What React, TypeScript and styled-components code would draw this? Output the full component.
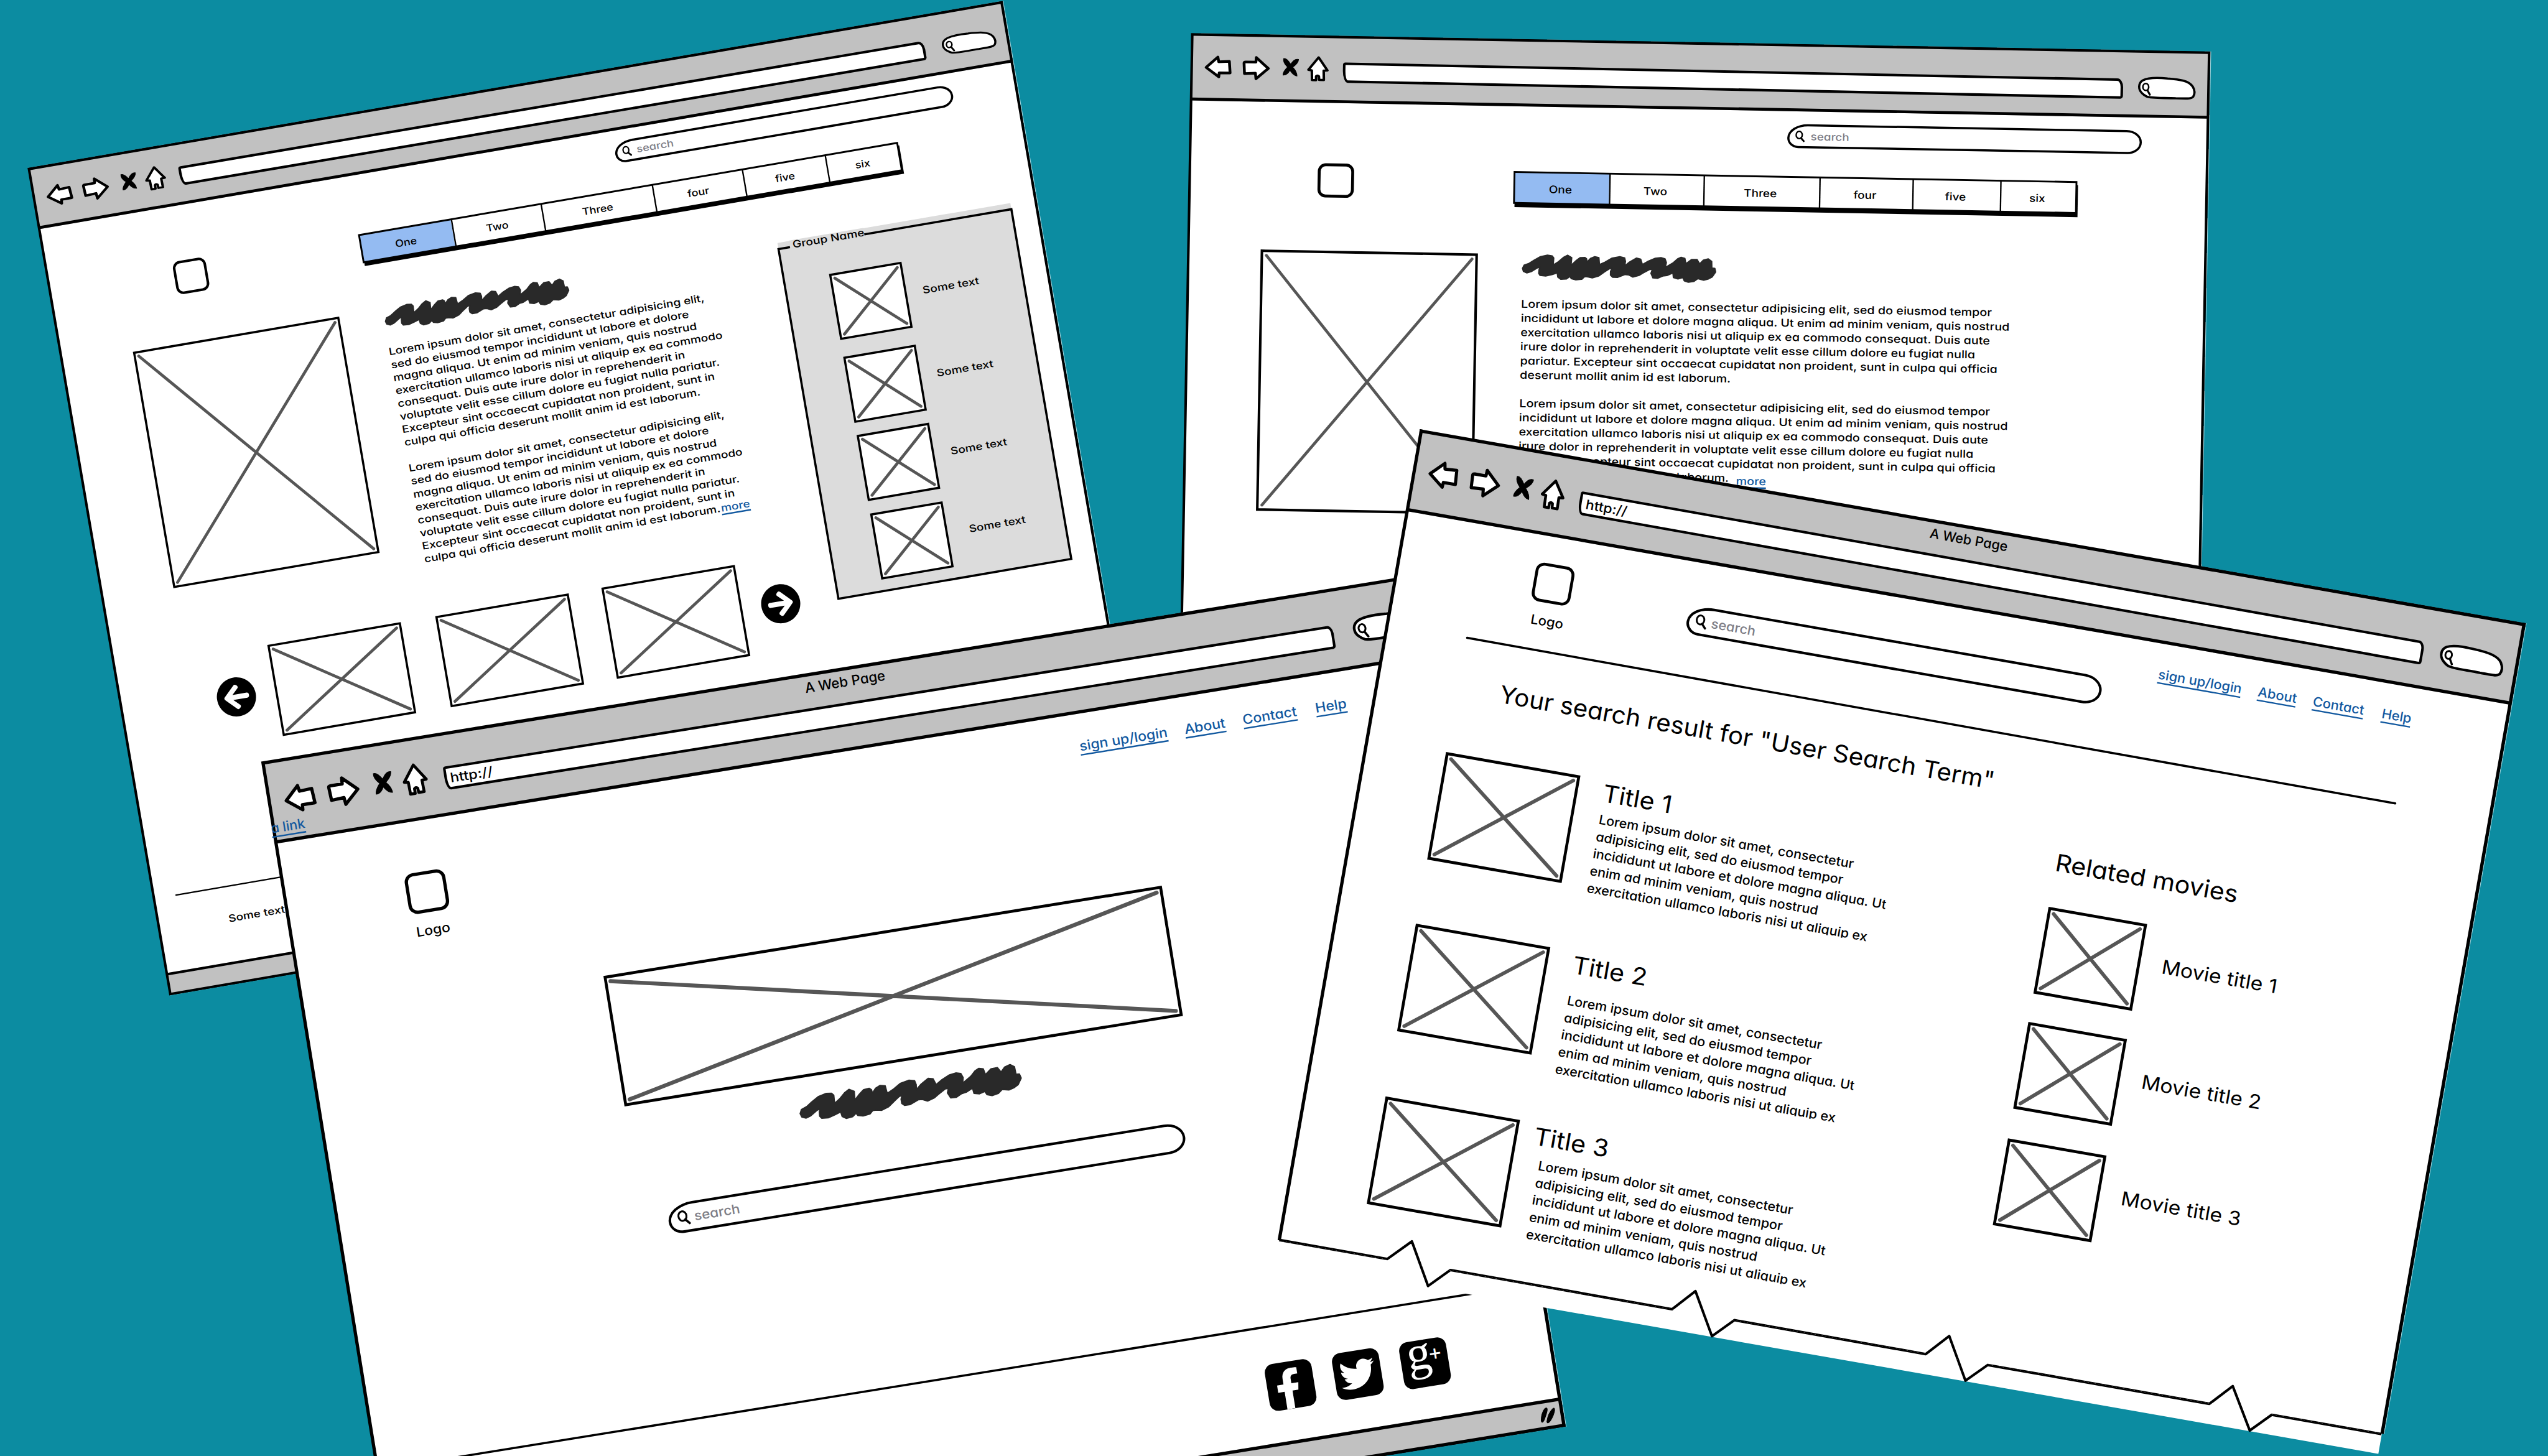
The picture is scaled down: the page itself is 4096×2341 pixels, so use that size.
import React from "react";
import styled, { createGlobalStyle, css } from "styled-components";
import { FaArrowCircleLeft, FaArrowCircleRight, FaFacebookF, FaTwitter } from "react-icons/fa";

const INK = "#000";
const CHROME = "#c1c1c1";
const LINK = "#11589f";
const HINT = "#7d7d86";

const GlobalStyle = createGlobalStyle`
  html, body { margin: 0; padding: 0; overflow: hidden; background: #0c8ca1; }
  * { box-sizing: border-box; }
`;

const Viewport = styled.main`
  position: relative;
  width: 4096px;
  height: 2341px;
  overflow: hidden;
  background: #0c8ca1;
`;

/* The desktop is laid out on a 7000 x 4000 canvas. */
const Desktop = styled.div`
  position: relative;
  width: 7000px;
  height: 4000px;
  transform: scale(0.585143);
  transform-origin: 0 0;
  font-family: Inter, "Open Sans", sans-serif;
  font-weight: 450;
  font-feature-settings: "cv11" 1;
  color: ${INK};
`;

/* ---------- window ---------- */

const WindowBox = styled.section<{
  $x: number; $y: number; $w: number; $h: number; $r: number; $stroke: number; $torn?: number;
}>`
  position: absolute;
  left: ${(p) => p.$x}px;
  top: ${(p) => p.$y}px;
  width: ${(p) => p.$w}px;
  height: ${(p) => p.$h}px;
  transform: rotate(${(p) => p.$r}deg);
  transform-origin: 0 0;
  background: #fff;
  display: flex;
  flex-direction: column;

  &::after {
    content: "";
    position: absolute;
    top: ${(p) => -p.$stroke / 2}px;
    left: ${(p) => -p.$stroke / 2}px;
    right: ${(p) => -p.$stroke / 2}px;
    bottom: ${(p) => (p.$torn ? p.$torn : -p.$stroke / 2)}px;
    border: ${(p) => p.$stroke}px solid ${INK};
    ${(p) => p.$torn && css`border-bottom: 0;`}
    box-shadow: 2px 0 0 rgba(255, 255, 255, 0.6);
    pointer-events: none;
  }
`;

const Chrome = styled.header<{ $h: number; $stroke: number }>`
  flex: none;
  height: ${(p) => p.$h + p.$stroke / 2}px;
  margin-bottom: ${(p) => -p.$stroke / 2}px;
  background: ${CHROME};
  border-bottom: ${(p) => p.$stroke}px solid ${INK};
`;

const ChromeTitle = styled.div<{ $h: number }>`
  height: ${(p) => p.$h}px;
  display: flex;
  justify-content: center;
  padding: 11px 8px 0 0;
`;

const ChromeRow = styled.div`
  display: flex;
  align-items: flex-start;
`;

const Glyph = styled.svg<{ $w: number; $h: number; $ml: number }>`
  flex: none;
  display: block;
  overflow: visible;
  width: ${(p) => p.$w}px;
  height: ${(p) => p.$h}px;
  margin-left: ${(p) => p.$ml}px;
`;

const UrlBar = styled.div<{ $w: number; $h: number; $mt: number; $ml: number }>`
  flex: none;
  width: ${(p) => p.$w}px;
  height: ${(p) => p.$h}px;
  margin: ${(p) => p.$mt}px 0 0 ${(p) => p.$ml}px;
  background: #fff;
  outline: 7px solid ${INK};
  outline-offset: -3px;
  border-radius: 3px 12px 4px 10px / 3px 20px 4px 30px;
  transform: rotate(0.15deg);
  transform-origin: 0 0;
  padding-left: 12px;
  display: flex;
  align-items: center;
`;

/* ---------- text ---------- */

const Text = styled.div<{
  $s: number; $lh?: number; $x?: number; $mt?: number; $ml?: number; $w?: number; $clip?: number; $c?: string;
}>`
  flex: none;
  font-size: ${(p) => p.$s}px;
  line-height: ${(p) => p.$lh ?? 48}px;
  margin: ${(p) => p.$mt ?? 0}px 0 0 ${(p) => p.$ml ?? 0}px;
  color: ${(p) => p.$c ?? INK};
  white-space: pre;
  transform: scaleX(${(p) => p.$x ?? 1});
  transform-origin: 0 0;
  ${(p) => p.$w !== undefined && css`width: ${p.$w}px;`}
  ${(p) => p.$clip !== undefined && css`height: ${p.$clip}px; overflow: hidden;`}
`;

const Heading = styled(Text)`
  font-weight: 400;
`;

const Link = styled.a<{ $ml?: number; $drop?: number; $s?: number }>`
  color: ${LINK};
  margin-left: ${(p) => p.$ml ?? 0}px;
  ${(p) => p.$drop && css`position: relative; top: ${p.$drop}px;`}
  text-decoration: underline;
  text-decoration-thickness: 3.5px;
  text-decoration-skip-ink: none;
  text-underline-offset: ${(p) => p.$s ?? 9}px;
`;

const CornerLink = styled.div`
  position: absolute;
  left: -7px;
  top: 158px;
  z-index: 2;
`;

/* ---------- wireframe parts ---------- */

const Body = styled.div<{ $h: number }>`
  flex: none;
  height: ${(p) => p.$h}px;
  display: flex;
  flex-direction: column;
  align-items: flex-start;
`;

const Row = styled.div<{ $h?: number; $mt?: number; $ml?: number; $gap?: number; $center?: boolean }>`
  flex: none;
  display: flex;
  align-items: ${(p) => (p.$center ? "center" : "flex-start")};
  gap: ${(p) => p.$gap ?? 0}px;
  margin: ${(p) => p.$mt ?? 0}px 0 0 ${(p) => p.$ml ?? 0}px;
  ${(p) => p.$h !== undefined && css`height: ${p.$h}px;`}
`;

const Column = styled.div<{ $w: number; $mt?: number; $ml?: number }>`
  flex: none;
  display: flex;
  flex-direction: column;
  align-items: flex-start;
  width: ${(p) => p.$w}px;
  margin: ${(p) => p.$mt ?? 0}px 0 0 ${(p) => p.$ml ?? 0}px;
`;

const LogoBox = styled.div<{ $w: number; $h?: number; $mt?: number; $ml?: number }>`
  flex: none;
  width: ${(p) => p.$w}px;
  height: ${(p) => p.$h ?? p.$w}px;
  margin: ${(p) => p.$mt ?? 0}px 0 0 ${(p) => p.$ml ?? 0}px;
  border: ${(p) => p.$w * 0.08}px solid ${INK};
  border-radius: ${(p) => p.$w * 0.22}px;
`;

const ImageBox = styled.div<{ $w: number; $h: number; $mt?: number; $ml?: number; $stroke: number }>`
  flex: none;
  width: ${(p) => p.$w}px;
  height: ${(p) => p.$h}px;
  margin: ${(p) => p.$mt ?? 0}px 0 0 ${(p) => p.$ml ?? 0}px;
  background: #fff;
  outline: ${(p) => p.$stroke}px solid ${INK};
  outline-offset: ${(p) => -p.$stroke / 2}px;

  svg { display: block; }
`;

const SearchPill = styled.div<{ $w: number; $h: number; $mt?: number; $ml?: number; $stroke: number }>`
  flex: none;
  width: ${(p) => p.$w}px;
  height: ${(p) => p.$h}px;
  margin: ${(p) => p.$mt ?? 0}px 0 0 ${(p) => p.$ml ?? 0}px;
  display: flex;
  align-items: center;
  background: #fff;
  outline: ${(p) => p.$stroke}px solid ${INK};
  outline-offset: ${(p) => -p.$stroke / 2}px;
  border-radius: ${(p) => `${p.$h * 0.9}px ${p.$h * 0.65}px ${p.$h * 0.6}px ${p.$h * 0.45}px / ${p.$h * 0.58}px ${p.$h * 0.5}px ${p.$h * 0.48}px ${p.$h * 0.4}px`};
`;

const Rule = styled.hr<{ $w: number; $ml: number; $mt?: number; $t: number; $r?: number }>`
  flex: none;
  width: ${(p) => p.$w}px;
  height: ${(p) => p.$t}px;
  margin: ${(p) => p.$mt ?? 0}px 0 0 ${(p) => p.$ml}px;
  border: 0;
  background: ${INK};
  transform: rotate(${(p) => p.$r ?? 0}deg);
  border-radius: 3px;
`;

const TabBar = styled.nav<{ $h: number; $mt: number; $ml: number; $shadow: number }>`
  flex: none;
  display: flex;
  height: ${(p) => p.$h}px;
  margin: ${(p) => p.$mt}px 0 0 ${(p) => p.$ml}px;
  outline: 5px solid ${INK};
  outline-offset: -2px;
  box-shadow: 3px ${(p) => p.$shadow}px 0 2px ${INK};
`;

const Tab = styled.div<{ $w: number; $on?: boolean; $s: number; $x: number }>`
  width: ${(p) => p.$w}px;
  display: flex;
  align-items: center;
  justify-content: center;
  background: ${(p) => (p.$on ? "#94bbf2" : "#fff")};
  font-size: ${(p) => p.$s}px;
  padding: 6px 8px 0 0;

  & + & { border-left: 4px solid ${INK}; }

  span { transform: scaleX(${(p) => p.$x}); }
`;

const Group = styled.aside`
  flex: none;
  width: 649px;
  height: 992px;
  margin-top: 7px;
  padding-top: 17px;
  background: #dcdcdc;
`;

const GroupFrame = styled.div`
  height: 975px;
  outline: 6px solid ${INK};
  outline-offset: -3px;
  display: flex;
  flex-direction: column;
  align-items: flex-start;
`;

const Legend = styled.div`
  position: relative;
  width: 207px;
  margin: -18px 0 0 32px;
  padding-left: 8px;
  background: #dcdcdc;
`;

const StatusBar = styled.footer<{ $h: number; $stroke: number }>`
  flex: none;
  margin-top: auto;
  height: ${(p) => p.$h}px;
  background: ${CHROME};
  border-top: ${(p) => p.$stroke}px solid ${INK};
  display: flex;
  justify-content: flex-end;
  align-items: center;
  padding-right: 16px;
`;

const Badge = styled.div<{ $bottom?: boolean }>`
  width: 130px;
  height: 130px;
  border-radius: 24px;
  background: ${INK};
  color: #fff;
  display: flex;
  justify-content: ${(p) => (p.$bottom ? "flex-end" : "center")};
  align-items: ${(p) => (p.$bottom ? "flex-end" : "center")};
  padding-right: ${(p) => (p.$bottom ? 16 : 0)}px;
`;

const PlusMark = styled.span`
  font-family: "Liberation Serif", serif;
  font-weight: 400;
  font-size: 134px;
  line-height: 154px;
  margin-top: -44px;
  display: flex;

  i {
    font-style: normal;
    font-size: 56px;
    line-height: 172px;
    margin-left: -4px;
    -webkit-text-stroke: 2px #fff;
  }
`;

/* ---------- drawings ---------- */

const strokeProps = { fill: "#fff", stroke: INK, strokeWidth: 9, strokeLinejoin: "round" as const };

function NavGlyphs({ sx, sy }: { sx: number; sy: number }) {
  const h = 100 * sy;
  return (
    <>
      <Glyph $w={88 * sx} $h={h} $ml={42 * sx} viewBox="42 60 88 100" preserveAspectRatio="none">
        <path {...strokeProps} d="M47 113 L84 77 L87 93 L121 91 L124 131 L89 131 L88 145 Z" />
      </Glyph>
      <Glyph $w={90 * sx} $h={h} $ml={32 * sx} viewBox="162 60 90 100" preserveAspectRatio="none">
        <path {...strokeProps} d="M168 96 Q168 92 174 92 L206 92 L207 76 L246 113 L207 149 L205 130 L170 132 Z" />
      </Glyph>
      <Glyph $w={50 * sx} $h={h} $ml={40 * sx} viewBox="290 60 50 100" preserveAspectRatio="none">
        <path
          fill={INK}
          stroke={INK}
          strokeWidth={2}
          d="M293 78 C300 76 308 84 316 97 C324 83 332 77 341 80 C341 90 333 99 323 107 C330 115 337 124 337 137 C329 137 320 128 314 118 C308 130 301 136 292 135 C291 125 299 115 306 107 C297 98 291 88 293 78 Z"
        />
      </Glyph>
      <Glyph $w={72 * sx} $h={h} $ml={28 * sx} viewBox="370 60 72 100" preserveAspectRatio="none">
        <path {...strokeProps} strokeWidth={8} d="M407 72 L436 116 L424 117 L425 149 L410 149 L409 137 Q404 132 400 137 L400 150 L387 150 L386 117 L375 115 Z" />
      </Glyph>
    </>
  );
}

function Magnifier({ size, ml, mr }: { size: number; ml: number; mr: number }) {
  return (
    <Glyph $w={size} $h={size} $ml={ml} viewBox="0 0 40 40" style={{ marginRight: mr }}>
      <ellipse cx="17" cy="16" rx="10.5" ry="12.5" fill="none" stroke={INK} strokeWidth="5" />
      <path d="M23 26 L33 37" stroke={INK} strokeWidth="6" strokeLinecap="round" />
    </Glyph>
  );
}

const Offset = styled.div<{ $mt: number; $ml: number }>`
  flex: none;
  margin: ${(p) => p.$mt}px 0 0 ${(p) => p.$ml}px;
`;

function SearchBlob({ w, h, mt, ml }: { w: number; h: number; mt: number; ml: number }) {
  return (
    <Offset $mt={mt} $ml={ml}>
      <Glyph $w={w} $h={h} $ml={0} viewBox="0 0 180 70" preserveAspectRatio="none">
        <path {...strokeProps} strokeWidth={7} d="M14 52 C1 40 1 20 16 11 C32 2 66 2 92 4 C130 6 158 10 170 28 C177 40 177 52 172 60 C166 68 148 66 118 66 C78 65 42 68 28 62 C20 58 17 55 14 52 Z" />
        <ellipse cx="25" cy="32" rx="9" ry="11" fill="none" stroke={INK} strokeWidth="5" />
        <path d="M30 42 L38 56" stroke={INK} strokeWidth="6" strokeLinecap="round" />
      </Glyph>
    </Offset>
  );
}

const SCRIBBLE =
  "88,235 100,208 135,195 170,170 215,142 265,130 300,136 311,152 308,208 345,182 380,148 410,130 440,150 436,210 470,175 500,150 535,148 547,160 550,185 575,155 605,142 635,150 640,205 680,185 730,153 785,142 820,152 826,180 822,215 855,185 905,153 935,162 948,205 990,178 1040,155 1080,150 1110,160 1120,190 1112,228 1170,190 1200,160 1225,147 1252,156 1260,198 1300,165 1340,165 1358,200 1385,170 1420,160 1445,180 1447,233 1468,235 1475,265 1450,305 1420,322 1390,330 1348,318 1320,340 1280,347 1250,335 1240,310 1205,320 1172,310 1168,273 1125,293 1095,297 1060,315 1025,312 1010,275 1020,245 1000,245 950,275 925,292 880,305 850,288 825,285 770,308 735,306 720,290 720,260 730,235 710,240 680,262 635,297 590,312 560,304 535,302 515,322 470,327 440,318 430,300 405,320 365,323 342,305 338,272 300,285 255,297 215,292 205,275 207,245 215,226 195,232 150,262 120,272 95,260";

function Scribble({ w, mt, ml }: { w: number; mt?: number; ml?: number }) {
  const h = (w * 67) / 532;
  return (
    <Offset $mt={mt ?? 0} $ml={ml ?? 0}>
      <Glyph $w={w} $h={h} $ml={0} viewBox="0 0 1390 194" preserveAspectRatio="none">
        <polygon
          points={SCRIBBLE}
          transform="matrix(1 -0.02044 0 1 -85 -126.3)"
          fill="#292929"
          stroke="#292929"
          strokeWidth="9"
          strokeLinejoin="round"
        />
      </Glyph>
    </Offset>
  );
}

function Picture(p: { w: number; h: number; mt?: number; ml?: number; stroke?: number; line?: number }) {
  const s = p.stroke ?? 8;
  const i = s + 5;
  return (
    <ImageBox $w={p.w} $h={p.h} $mt={p.mt} $ml={p.ml} $stroke={s}>
      <svg width={p.w} height={p.h}>
        <path
          d={`M${i} ${i} L${p.w - i} ${p.h - i} M${p.w - i} ${i} L${i} ${p.h - i}`}
          stroke="#565656"
          strokeWidth={p.line ?? 10}
          strokeLinecap="round"
        />
      </svg>
    </ImageBox>
  );
}

function Tabs(p: { widths: number[]; h: number; mt: number; ml: number; s: number; x: number; shadow: number }) {
  const names = ["One", "Two", "Three", "four", "five", "six"];
  return (
    <TabBar $h={p.h} $mt={p.mt} $ml={p.ml} $shadow={p.shadow}>
      {names.map((n, i) => (
        <Tab key={n} $w={p.widths[i]} $on={i === 0} $s={p.s} $x={p.x}>
          <span>{n}</span>
        </Tab>
      ))}
    </TabBar>
  );
}

/* ---------- windows ---------- */

const LOREM_NARROW = [
  "Lorem ipsum dolor sit amet, consectetur adipisicing elit,",
  "sed do eiusmod tempor incididunt ut labore et dolore",
  "magna aliqua. Ut enim ad minim veniam, quis nostrud",
  "exercitation ullamco laboris nisi ut aliquip ex ea commodo",
  "consequat. Duis aute irure dolor in reprehenderit in",
  "voluptate velit esse cillum dolore eu fugiat nulla pariatur.",
  "Excepteur sint occaecat cupidatat non proident, sunt in",
  "culpa qui officia deserunt mollit anim id est laborum.",
].join("\n");

const LOREM_WIDE = [
  "Lorem ipsum dolor sit amet, consectetur adipisicing elit, sed do eiusmod tempor",
  "incididunt ut labore et dolore magna aliqua. Ut enim ad minim veniam, quis nostrud",
  "exercitation ullamco laboris nisi ut aliquip ex ea commodo consequat. Duis aute",
  "irure dolor in reprehenderit in voluptate velit esse cillum dolore eu fugiat nulla",
  "pariatur. Excepteur sint occaecat cupidatat non proident, sunt in culpa qui officia",
  "deserunt mollit anim id est laborum.",
].join("\n");

const LOREM_SHORT = [
  "Lorem ipsum dolor sit amet, consectetur",
  "adipisicing elit, sed do eiusmod tempor",
  "incididunt ut labore et dolore magna aliqua. Ut",
  "enim ad minim veniam, quis nostrud",
  "exercitation ullamco laboris nisi ut aliquip ex",
].join("\n");

function GalleryWindow() {
  const thumbs = [
    { mt: 88, ml: 47 },
    { mt: 53, ml: 47 },
    { mt: 40, ml: 48 },
    { mt: 41, ml: 62 },
  ];
  return (
    <WindowBox $x={78.5} $y={464} $w={2711} $h={2300} $r={-9.72} $stroke={7}>
      <Chrome $h={164} $stroke={8}>
        <ChromeTitle $h={45} />
        <ChromeRow>
          <NavGlyphs sx={0.835} sy={0.75} />
          <UrlBar $w={2070} $h={45} $mt={22} $ml={40} />
          <SearchBlob w={151} h={53} mt={21} ml={50} />
        </ChromeRow>
      </Chrome>
      <Body $h={2078}>
        <Row $h={155}>
          <SearchPill $w={936} $h={55} $mt={37} $ml={1598} $stroke={6}>
            <Magnifier size={30} ml={15} mr={12} />
            <Text $s={27} $lh={36} $x={1.16} $c={HINT}>search</Text>
          </SearchPill>
        </Row>
        <Row $h={222}>
          <LogoBox $w={92} $ml={344} />
          <Tabs widths={[255, 250, 310, 251, 231, 202]} h={75} mt={14} ml={428} s={27} x={1.14} shadow={9} />
        </Row>
        <Row $h={1492}>
          <Column $w={1993}>
            <Row $h={861}>
              <Picture w={569} h={653} mt={6} ml={200} stroke={6} line={8} />
              <Column $w={1099} $ml={125}>
                <Scribble w={512} mt={2} />
                <Text $s={27.5} $lh={36.1} $x={1.194} $mt={37} $ml={-4}>
                  {LOREM_NARROW + "\n\n" + LOREM_NARROW}
                  <Link $ml={2} $s={6}>more</Link>
                </Text>
              </Column>
            </Row>
            <Row $h={249} $center>
              <Row $ml={262}><FaArrowCircleLeft size={111} /></Row>
              <Picture w={366} h={248} ml={55} stroke={6} line={8} />
              <Picture w={366} h={248} ml={102} stroke={6} line={8} />
              <Picture w={366} h={248} ml={97} stroke={6} line={8} />
              <Row $ml={54}><FaArrowCircleRight size={111} /></Row>
            </Row>
          </Column>
          <Group>
            <GroupFrame>
              <Legend>
                <Text $s={27.5} $lh={24} $x={1.2}>Group Name</Text>
              </Legend>
              {thumbs.map((t, i) => (
                <Row key={i} $mt={t.mt} $ml={128} $h={178}>
                  <Picture w={196} h={178} stroke={6} line={8} />
                  <Text $s={27.5} $lh={36} $x={1.19} $mt={65.5} $ml={t.ml}>Some text</Text>
                </Row>
              ))}
            </GroupFrame>
          </Group>
        </Row>
        <Rule $w={2590} $ml={60} $t={4} />
        <Text $s={27.5} $lh={36} $x={1.19} $mt={68} $ml={193}>Some text</Text>
      </Body>
      <StatusBar $h={60} $stroke={7} />
    </WindowBox>
  );
}

function ArticleWindow() {
  return (
    <WindowBox $x={3275} $y={94} $w={2794} $h={2300} $r={1.03} $stroke={7}>
      <Chrome $h={178} $stroke={8}>
        <ChromeTitle $h={48} />
        <ChromeRow>
          <NavGlyphs sx={0.857} sy={0.8} />
          <UrlBar $w={2136} $h={48} $mt={26} $ml={41} />
          <SearchBlob w={160} h={61} mt={22} ml={44} />
        </ChromeRow>
      </Chrome>
      <Body $h={2078}>
        <Row $h={170}>
          <SearchPill $w={968} $h={60} $mt={42} $ml={1643} $stroke={6}>
            <Magnifier size={32} ml={16} mr={13} />
            <Text $s={28.5} $lh={39} $x={1.13} $c={HINT}>search</Text>
          </SearchPill>
        </Row>
        <Row $h={242}>
          <LogoBox $w={100} $h={94} $ml={352} />
          <Tabs widths={[260, 259, 318, 256, 241, 209]} h={84} mt={15} ml={441} s={29} x={1.12} shadow={10} />
        </Row>
        <Row>
          <Picture w={589} h={710} mt={2} ml={203} stroke={7} line={8} />
          <Column $w={1400} $ml={126}>
            <Scribble w={532} />
            <Text $s={29.5} $lh={39} $x={1.145} $mt={48} $ml={-1}>
              {LOREM_WIDE + "\n\n" + LOREM_WIDE}
              <Link $ml={17} $drop={8} $s={6}>more</Link>
            </Text>
          </Column>
        </Row>
      </Body>
    </WindowBox>
  );
}

function LandingWindow() {
  const links: [string, number][] = [["sign up/login", 240], ["About", 110], ["Contact", 150], ["Help", 84]];
  return (
    <WindowBox $x={722} $y={2096} $w={3237} $h={2368} $r={-9.2} $stroke={9}>
      <Chrome $h={220} $stroke={9}>
        <ChromeTitle $h={60}>
          <Text $s={38}>A Web Page</Text>
        </ChromeTitle>
        <ChromeRow>
          <NavGlyphs sx={1} sy={1} />
          <UrlBar $w={2467} $h={57} $mt={34} $ml={48}>
            <Text $s={36} $x={1.12}>http://</Text>
          </UrlBar>
          <SearchBlob w={188} h={72} mt={25} ml={57} />
        </ChromeRow>
      </Chrome>
      <CornerLink>
        <Text $s={37}><Link>a link</Link></Text>
      </CornerLink>
      <Body $h={2071}>
        <Row $mt={70} $ml={2222} $gap={52}>
          {links.map(([t, w]) => (
            <Text key={t} $s={37} $w={w} $x={1.065}><Link>{t}</Link></Text>
          ))}
        </Row>
        <LogoBox $w={113} $mt={27} $ml={332} />
        <Text $s={36} $mt={25} $ml={342} $x={1.09}>Logo</Text>
        <Picture w={1546} h={355} mt={181} ml={834} stroke={8} line={11} />
        <Scribble w={616} mt={58} ml={1302} />
        <SearchPill $w={1430} $h={75} $mt={158} $ml={903} $stroke={7}>
          <Magnifier size={42} ml={18} mr={8} />
          <Text $s={36} $x={1.07} $c={HINT}>search</Text>
        </SearchPill>
        <Rule $w={2890} $ml={172} $mt={511} $t={6} $r={0.05} />
        <Row $mt={101} $ml={2449} $gap={57}>
          <Badge $bottom><FaFacebookF size={112} /></Badge>
          <Badge><FaTwitter size={98} /></Badge>
          <Badge><PlusMark>g<i>+</i></PlusMark></Badge>
        </Row>
      </Body>
      <StatusBar $h={77} $stroke={9}>
        <Glyph $w={48} $h={46} $ml={0} viewBox="0 0 48 46">
          <path d="M20 4 C12 10 6 24 5 36 C6 42 10 40 14 33 C19 24 24 16 26 8 C27 2 24 2 20 4 Z M41 8 C33 14 24 26 20 40 C20 46 25 44 30 39 C37 31 43 22 46 12 C47 6 44 5 41 8 Z" fill={INK} stroke={INK} strokeWidth={2} />
        </Glyph>
      </StatusBar>
    </WindowBox>
  );
}

const TornEdge = styled.svg`
  flex: none;
  display: block;
  overflow: visible;
`;

function ResultsWindow() {
  const links: [string, number][] = [["sign up/login", 228], ["About", 103], ["Contact", 142], ["Help", 80]];
  const results = [
    { mt: 144, tml: -4, pmt: 7 },
    { mt: 187, tml: -4, pmt: 33 },
    { mt: 190, tml: -27, pmt: 12 },
  ];
  return (
    <WindowBox $x={3904} $y={1184} $w={3076} $h={2314} $r={9.95} $stroke={9} $torn={56}>
      <Chrome $h={219} $stroke={9}>
        <ChromeTitle $h={60}>
          <Text $s={37}>A Web Page</Text>
        </ChromeTitle>
        <ChromeRow>
          <NavGlyphs sx={0.955} sy={0.97} />
          <UrlBar $w={2347} $h={57} $mt={31} $ml={44}>
            <Text $s={36} $x={1.09} $ml={3}>http://</Text>
          </UrlBar>
          <SearchBlob w={180} h={69} mt={27} ml={49} />
        </ChromeRow>
      </Chrome>
      <Body $h={1971}>
        <Row $h={320}>
          <Column $w={107} $mt={79} $ml={376}>
            <LogoBox $w={108} />
            <Text $s={36} $mt={26} $ml={10} $x={1.05}>Logo</Text>
          </Column>
          <SearchPill $w={1148} $h={73} $mt={127} $ml={330} $stroke={7}>
            <Magnifier size={40} ml={16} mr={8} />
            <Text $s={36} $x={1.04} $c={HINT}>search</Text>
          </SearchPill>
          <Row $mt={65} $ml={150} $gap={50}>
            {links.map(([t, w]) => (
              <Text key={t} $s={36} $w={w} $x={1.04}><Link>{t}</Link></Text>
            ))}
          </Row>
        </Row>
        <Rule $w={2596} $ml={220} $t={6} $r={0.17} />
        <Heading $s={66} $lh={86} $x={1.045} $mt={86} $ml={338}>Your search result for "User Search Term"</Heading>
        <Row>
          <Column $w={1928}>
            {results.map((r, i) => (
              <Row key={i} $mt={r.mt} $ml={224} $h={292} $gap={77}>
                <Picture w={367} h={292} />
                <Column $w={900}>
                  <Heading $s={66} $lh={86} $x={1.07} $mt={-11} $ml={r.tml}>{`Title ${i + 1}`}</Heading>
                  <Text $s={35.5} $lh={47.7} $x={1.037} $mt={r.pmt} $ml={-2} $clip={229}>{LOREM_SHORT}</Text>
                </Column>
              </Row>
            ))}
          </Column>
          <Column $w={1100} $mt={106}>
            <Heading $s={66} $lh={86} $x={1.065} $ml={-6}>Related movies</Heading>
            {[85, 87, 91].map((mt, i) => (
              <Row key={i} $mt={mt} $h={234} $gap={68}>
                <Picture w={267} h={234} />
                <Heading $s={53} $lh={66} $x={1.09} $mt={71} $ml={-4}>{`Movie title ${i + 1}`}</Heading>
              </Row>
            ))}
          </Column>
        </Row>
      </Body>
      <TornEdge width={3076} height={124} viewBox="0 2190 3076 124">
        <path
          d="M0 2257 L302 2257 L360 2198 L425 2311 L478 2257 L1096 2258 L1151 2198 L1217 2312 L1270 2258 L1804 2259 L1859 2199 L1924 2312 L1977 2259 L2595 2259 L2650 2200 L2717 2312 L2769 2259 L3075 2259"
          fill="none"
          stroke={INK}
          strokeWidth="7"
          strokeLinejoin="round"
        />
      </TornEdge>
    </WindowBox>
  );
}

export default function App() {
  return (
    <Viewport>
      <GlobalStyle />
      <Desktop>
        <GalleryWindow />
        <ArticleWindow />
        <LandingWindow />
        <ResultsWindow />
      </Desktop>
    </Viewport>
  );
}
